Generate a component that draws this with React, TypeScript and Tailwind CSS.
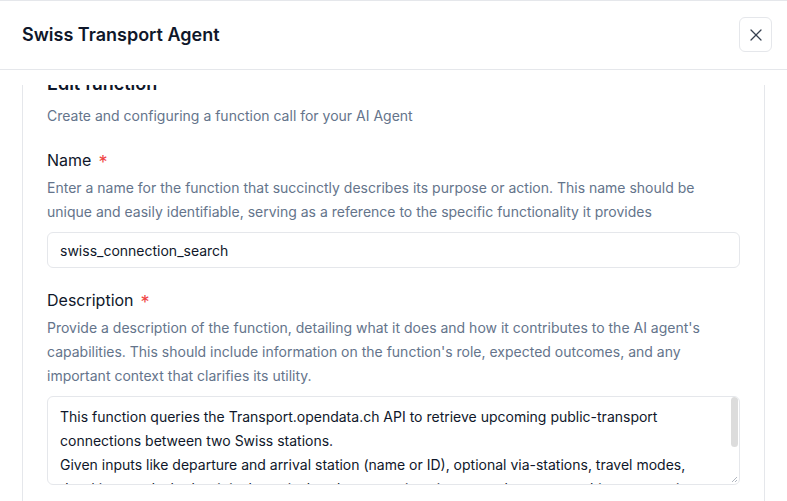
import React from "react";

function CloseIcon() {
  return (
    <svg width="20" height="20" viewBox="0 0 24 24" fill="none" stroke="#374151" strokeWidth="1.5" strokeLinecap="round" strokeLinejoin="round">
      <path d="M18 6 6 18" />
      <path d="m6 6 12 12" />
    </svg>
  );
}

function Label({ children }: { children: React.ReactNode }) {
  return (
    <div className="text-base leading-6 font-normal text-[#0f172a]">
      {children}
      <span className="relative top-[3px] ml-[7px] text-[18px] text-[#ef4444]">*</span>
    </div>
  );
}

export default function App() {
  const text =
    "This function queries the Transport.opendata.ch API to retrieve upcoming public-transport connections between two Swiss stations.\nGiven inputs like departure and arrival station (name or ID), optional via-stations, travel modes, date/time, and whether it is the arrival or departure time, it returns the next matching connections.";
  return (
    <div
      className="w-[787px] h-[501px] flex flex-col bg-white overflow-hidden"
      style={{ fontFamily: "Inter, 'Noto Sans', sans-serif" }}
    >
      <div className="h-[70px] shrink-0 border-t border-b border-[#e5e7eb] flex items-center justify-between pl-[22px] pr-[15px]">
        <div className="text-lg font-semibold text-[#0f172a] leading-7 -mt-[1px]">Swiss Transport Agent</div>
        <button className="w-[33px] h-[35px] border border-[#e5e7eb] rounded-md flex items-center justify-center -mt-[1px]">
          <CloseIcon />
        </button>
      </div>
      <div className="h-[15px] shrink-0" />
      <div className="flex-1 overflow-hidden px-[22px]">
        <div className="border-x border-[#e5e7eb] px-6 h-[600px]">
          <div className="-mt-[15px] text-lg leading-7 font-semibold text-[#0f172a]">Edit function</div>
          <div className="mt-2 text-sm leading-5 text-[#64748b]">
            Create and configuring a function call for your AI Agent
          </div>
          <div className="mt-[22px]">
            <Label>Name</Label>
          </div>
          <div className="mt-1 text-sm leading-6 text-[#64748b]">
            Enter a name for the function that succinctly describes its purpose or action. This name should be unique and easily identifiable, serving as a reference to the specific functionality it provides
          </div>
          <div className="mt-2 h-9 border border-[#e5e7eb] rounded-md px-3 pt-[1px] flex items-center text-sm text-[#0f172a]">
            swiss_connection_search
          </div>
          <div className="mt-5">
            <Label>Description</Label>
          </div>
          <div className="mt-1 text-sm leading-6 text-[#64748b]">
            Provide a description of the function, detailing what it does and how it contributes to the AI agent's capabilities. This should include information on the function's role, expected outcomes, and any important context that clarifies its utility.
          </div>
          <div className="relative mt-2 h-[89px] border border-[#e5e7eb] rounded-md overflow-hidden">
            <div className="px-3 py-2 pr-5 text-sm leading-6 text-[#0f172a] whitespace-pre-line">{text}</div>
            <div className="absolute right-[1px] top-[0px] w-[7px] h-[50px] rounded-full bg-[#dcdcdc]" />
            <svg className="absolute right-[1px] bottom-[1px]" width="8" height="8" viewBox="0 0 8 8">
              <rect x="0" y="0" width="8" height="8" fill="#ffffff" />
              <path d="M7 2 L2 7 M7 5 L5 7" stroke="#9ca3af" strokeWidth="0.8" />
            </svg>
          </div>
        </div>
      </div>
    </div>
  );
}
